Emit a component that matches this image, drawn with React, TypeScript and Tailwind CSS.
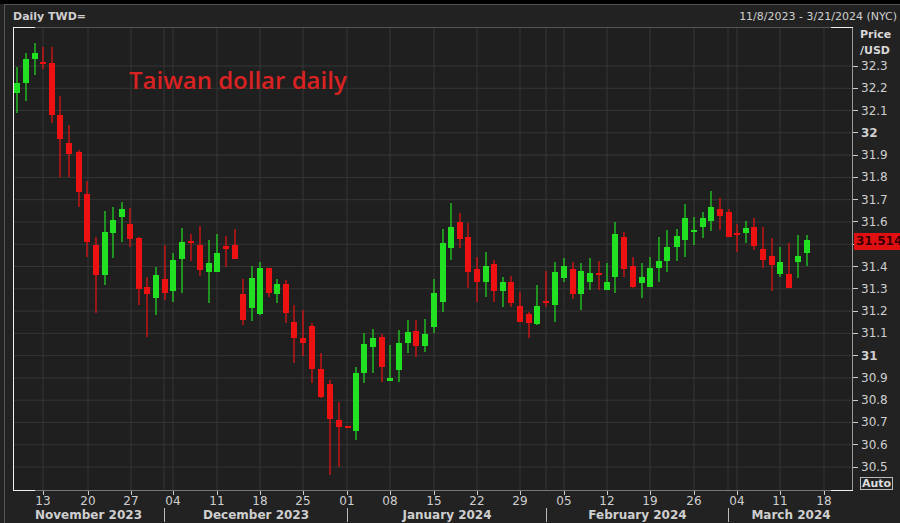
const C: [number, number, number, number, number, number][] = [
[16,67,113,83,93,1],[25,53,101,59,83,1],[34,43,75,53,59,1],[42,47,69,62,64,0],[51,47,123,63,115,0],
[59,96,177,115,139,0],[68,125,177,143,154,0],[78,150,207,152,192,0],[86,181,257,194,242,0],[95,237,313,245,275,0],
[104,211,285,232,275,1],[112,207,258,220,233,1],[121,202,242,209,217,1],[129,208,247,224,239,0],[138,237,305,238,289,0],
[146,277,337,287,294,0],[155,267,315,275,298,1],[164,245,300,279,293,0],[172,253,302,260,291,1],[181,228,293,242,259,1],
[190,234,261,241,243,0],[199,226,276,245,270,0],[208,240,303,263,272,1],[216,234,272,253,272,1],[225,236,267,246,249,0],
[234,229,259,245,259,0],[242,279,325,294,320,0],[251,266,321,278,308,1],[259,262,315,268,314,1],[268,268,297,268,293,0],
[276,279,303,284,294,1],[285,280,323,284,313,0],[293,305,363,322,338,0],[302,310,356,338,343,0],[311,323,383,326,369,0],
[320,353,398,369,397,0],[329,380,475,384,419,0],[338,402,467,420,427,0],[347,426,428,426,428,0],[355,367,440,373,431,1],
[363,333,383,344,373,1],[372,329,373,338,347,1],[381,334,382,337,367,0],[389,345,381,378,381,1],[398,330,382,343,370,1],
[407,320,353,332,343,1],[415,320,357,331,346,0],[424,319,352,334,346,1],[433,279,333,293,327,1],[442,229,312,243,302,1],
[450,203,260,227,248,1],[459,213,248,222,239,0],[467,223,288,237,272,0],[476,257,302,269,282,0],[485,252,297,266,282,1],
[493,260,302,264,291,0],[502,277,307,282,291,1],[510,276,307,282,303,0],[519,292,322,306,322,0],[528,312,338,314,323,0],
[536,285,325,306,324,1],[545,271,307,301,303,0],[554,262,322,272,305,1],[563,258,282,266,278,1],[572,262,299,269,294,0],
[580,263,310,271,294,1],[589,258,290,273,282,1],[598,261,290,273,275,0],[606,263,290,282,290,1],[614,222,293,234,277,1],
[623,232,277,237,269,0],[632,257,288,266,287,0],[641,263,298,277,283,1],[649,257,287,268,287,1],[658,237,282,261,268,1],
[666,230,272,247,261,1],[676,229,261,236,247,1],[684,204,257,218,240,1],[693,217,245,230,232,1],[702,212,238,218,227,1],
[710,191,231,207,221,1],[719,198,230,209,216,0],[728,209,237,212,237,0],[736,224,252,233,235,0],[745,221,243,228,233,1],
[753,218,250,227,246,0],[762,227,268,249,260,0],[771,238,291,256,265,0],[779,247,277,262,274,1],[788,243,288,274,288,0],
[797,235,278,256,262,1],[806,235,266,240,253,1],
];
const prices = ["32.3","32.2","32.1","32","31.9","31.8","31.7","31.6","31.5","31.4","31.3","31.2","31.1","31","30.9","30.8","30.7","30.6","30.5"];
const py = (i: number) => 66 + i * 22.28;
const weeks: [number, string][] = [[42,"13"],[87,"20"],[130,"27"],[172,"04"],[216,"11"],[259,"18"],[302,"25"],[346,"01"],[389,"08"],[433,"15"],[476,"22"],[519,"29"],[563,"05"],[606,"12"],[649,"19"],[693,"26"],[736,"04"],[779,"11"],[823,"18"]];
const months: [number, string][] = [[151,"November 2023"],[183,"December 2023"],[199,"January 2024"],[182,"February 2024"],[125,"March 2024"]];
const OX = 12, OY = 27;

function Plot() {
  return (
    <svg width={840} height={464} viewBox={`${OX} ${OY} 840 464`} className="block">
      <rect x={12} y={27} width={840} height={464} fill="#1f1f1f" />
      {prices.map((_, i) => <line key={i} x1={12} x2={852} y1={py(i)} y2={py(i)} stroke="#363636" />)}
      {[...weeks.map(w => w[0]), 163, 545, 727].map((x, i) => <line key={i} x1={x} x2={x} y1={27} y2={491} stroke="#363636" />)}
      <line x1={12} x2={852} y1={27.5} y2={27.5} stroke="#555" />
      <line x1={851.5} x2={851.5} y1={27} y2={491} stroke="#999" />
      <line x1={12} x2={852} y1={490.5} y2={490.5} stroke="#777" />
      <line x1={12.5} x2={12.5} y1={27} y2={491} stroke="#eee" />
      <line x1={12} x2={34} y1={27.5} y2={27.5} stroke="#eee" />
      <line x1={12} x2={34} y1={490.5} y2={490.5} stroke="#eee" />
      <line x1={830} x2={852} y1={27.5} y2={27.5} stroke="#eee" />
      <line x1={830} x2={852} y1={490.5} y2={490.5} stroke="#eee" />
      {C.map(([x, wt, wb, bt, bb, up], i) => {
        const col = up ? "#22e022" : "#ee1111";
        return (
          <g key={i}>
            <line x1={x} x2={x} y1={wt} y2={wb} stroke={col} strokeWidth={1.2} />
            <rect x={x - 3} y={bt} width={6} height={Math.max(2, bb - bt)} fill={col} />
          </g>
        );
      })}
    </svg>
  );
}

export default function App() {
  return (
    <div className="w-[900px] h-[523px] bg-[#222222] flex flex-col overflow-hidden border-t-4 border-t-black" style={{ fontFamily: "Tahoma, 'DejaVu Sans', 'Liberation Sans', sans-serif" }}>
      <div className="flex-1 flex flex-col border-l border-t border-[#555] ml-[4px]">
        <div className="h-[22px] flex items-end justify-between pl-[8px] pr-[3px] pb-[2px] text-[11px] text-[#cfcfcf]">
          <span className="font-bold">Daily TWD=</span>
          <span>11/8/2023 - 3/21/2024 (NYC)</span>
        </div>
        <div className="flex pl-[8px]">
          <div className="relative">
            <Plot />
            <div className="absolute left-[116px] top-[37px] text-[24px] leading-[32px] font-semibold text-[#d92222]" style={{ fontFamily: "'Open Sans', sans-serif" }}>Taiwan dollar daily</div>
          </div>
          <div className="relative w-[48px] h-[464px]">
            <div className="pl-[7px] pt-[0px] text-[11px] font-bold leading-[16px] text-[#d8d8d8]">Price<br />/USD</div>
            {prices.map((p, i) => (
              <div key={i} className="absolute left-0 flex items-center h-[14px]" style={{ top: py(i) - OY - 7 }}>
                <span className="w-[5px] h-px bg-[#ccc]" />
                {i !== 8 && <span className={`ml-[3px] text-[12px] text-[#cfcfcf] ${p.length <= 2 ? "font-bold" : ""}`}>{p}</span>}
              </div>
            ))}
            <div className="absolute left-[1px] top-[206px] w-[47px] h-[17px] bg-[#e01010] pl-[2px] text-[12px] leading-[17px] font-bold text-[#3a0000]">31.514</div>
            <div className="absolute left-[7px] bottom-[1px] px-[1px] border border-[#bbb] text-[11px] leading-[11px] font-bold text-[#ddd]">Auto</div>
          </div>
        </div>
        <div className="relative h-[17px] ml-[8px] w-[840px]">
          {weeks.map(([x, d], i) => (
            <div key={i} className="absolute top-0 w-[30px] flex flex-col items-center text-[12px] leading-[13px] text-[#cfcfcf]" style={{ left: x - OX - 15 }}>
              <span className="w-px h-[4px] bg-[#ccc]" />
              <span>{d}</span>
            </div>
          ))}
        </div>
        <div className="flex ml-[8px] h-[14px]">
          {months.map(([w, m], i) => (
            <div key={i} className={`text-center text-[12px] leading-[14px] font-bold text-[#cfcfcf] ${i > 0 ? "border-l border-[#bbb]" : ""}`} style={{ width: w }}>{m}</div>
          ))}
        </div>
      </div>
    </div>
  );
}
